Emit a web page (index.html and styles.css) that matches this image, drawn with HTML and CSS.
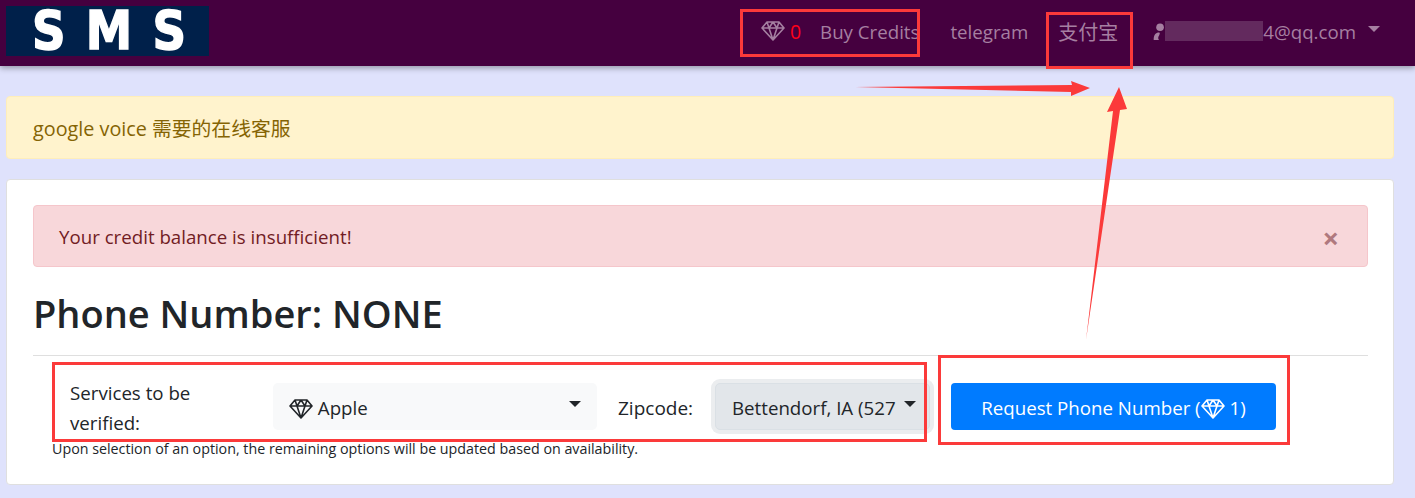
FILE: index.html
```html
<!DOCTYPE html>
<html lang="en">
<head>
    <meta charset="UTF-8">
    <meta name="viewport" content="width=device-width, initial-scale=1.0">
    <title>SMS</title>
    <link rel="stylesheet" href="styles.css">
</head>
<body>
    <svg class="icon-defs" width="0" height="0">
        <symbol id="gem" viewBox="0 0 24 20">
            <path d="M6 1h12l5 6-11 12L1 7zM1 7h22M8 7l4 12 4-12M6 1l2 6 4-6 4 6 2-6" fill="none" stroke="currentColor" stroke-width="1.6" stroke-linejoin="round"/>
        </symbol>
    </svg>
    <nav class="navbar">
        <a href="#" class="brand"><span>SMS</span></a>
        <ul class="nav-links">
            <li class="credits">
                <svg class="gem"><use href="#gem"/></svg>
                <span class="balance">0</span>
                <a href="#" class="buy">Buy Credits</a>
            </li>
            <li class="telegram"><a href="#">telegram</a></li>
            <li class="alipay"><a href="#">支付宝</a></li>
            <li class="account">
                <svg class="user" viewBox="0 0 10 16"><circle cx="6" cy="4" r="3.6" fill="currentColor"/><path d="M0 16c0-5 2-7 5-7 1 0 1 1 0 3-1 1-1 3 0 4z" fill="currentColor"/></svg>
                <span class="blur"></span><a href="#">4@qq.com</a>
                <span class="caret"></span>
            </li>
        </ul>
    </nav>

    <main class="content">
        <div class="notice">google voice 需要的在线客服</div>
        <section class="card">
            <div class="alert">
                <span>Your credit balance is insufficient!</span>
                <span class="close">×</span>
            </div>
            <h1>Phone Number: NONE</h1>
            <hr>
            <form class="request-form">
                <label class="service-label">Services to be verified:</label>
                <div class="select service">
                    <span><svg class="gem"><use href="#gem"/></svg> Apple</span>
                    <span class="caret"></span>
                </div>
                <label class="zip-label">Zipcode:</label>
                <div class="select zip">
                    <span>Bettendorf, IA (527</span>
                    <span class="caret"></span>
                </div>
                <button type="button" class="request-btn">Request Phone Number (<svg class="gem"><use href="#gem"/></svg> 1)</button>
            </form>
            <small class="hint">Upon selection of an option, the remaining options will be updated based on availability.</small>
        </section>
    </main>

    <!-- red markup drawn on top of the screenshot -->
    <div class="mark mark-credits"></div>
    <div class="mark mark-alipay"></div>
    <div class="mark mark-form"></div>
    <div class="mark mark-btn"></div>
    <svg class="arrows" width="1415" height="498">
        <polygon points="855,87 1072,85 1071,81 1090,88 1071,96 1071,92" fill="#fb3a3a"/>
        <polygon points="1086,340 1113,111 1107,112 1119,87 1127,109 1120,110" fill="#fb3a3a"/>
    </svg>
</body>
</html>
```
FILE: styles.css
```css
body {
    font-family: 'Open Sans', 'Noto Sans CJK SC', sans-serif;
    margin: 0;
    background: #dfe2fc;
    color: #212529;
    font-size: 18.7px;
    height: 498px;
    overflow: hidden;
    position: relative;
}
.icon-defs {
    position: absolute;
}
.navbar {
    height: 66px;
    box-sizing: border-box;
    padding: 6px 35px 0 6px;
    background: #45003f;
    box-shadow: 0 2px 6px rgba(0, 0, 0, 0.35);
    display: flex;
    justify-content: space-between;
    align-items: flex-start;
}
.brand {
    width: 203px;
    height: 50px;
    box-sizing: border-box;
    padding-left: 26px;
    background: #00204a;
    color: white;
    font-family: 'DejaVu Sans', sans-serif;
    font-weight: bold;
    font-size: 53px;
    line-height: 50px;
    letter-spacing: 23px;
    text-decoration: none;
    white-space: nowrap;
    -webkit-text-stroke: 1.5px white;
}
.brand span {
    display: inline-block;
    transform: scaleX(0.88);
    transform-origin: left center;
}
.nav-links {
    list-style: none;
    margin: 0;
    padding: 0;
    height: 50px;
    display: flex;
    align-items: center;
    color: #a57fa1;
}
.nav-links a {
    color: #a57fa1;
    text-decoration: none;
}
.nav-links .gem {
    width: 24px;
    height: 20px;
    vertical-align: -3px;
}
.credits {
    display: flex;
    align-items: center;
}
.balance {
    color: #ff0018;
    font-size: 19.5px;
    margin-left: 5px;
    margin-right: 19px;
}
.telegram {
    margin-left: 31px;
}
.alipay {
    margin-left: 30px;
    font-size: 20px;
}
.account {
    margin-left: 35px;
    display: flex;
    align-items: center;
}
.user {
    width: 12px;
    height: 17px;
}
.blur {
    width: 98px;
    height: 20px;
    background: #632a5e;
}
.caret {
    display: inline-block;
    width: 0;
    height: 0;
    border-top: 6px solid currentColor;
    border-left: 6px solid transparent;
    border-right: 6px solid transparent;
}
.account .caret {
    margin-left: 12px;
    margin-top: -5px;
}
.content {
    padding: 30px 21px 0 6px;
}
.notice {
    height: 63px;
    box-sizing: border-box;
    padding-left: 26px;
    display: flex;
    align-items: center;
    background: #fff3cd;
    border: 1px solid #ffeeba;
    border-radius: 4px;
    color: #856404;
    font-size: 19.8px;
}
.card {
    margin-top: 20px;
    height: 306px;
    box-sizing: border-box;
    padding: 25px 25px 0 26px;
    background: white;
    border: 1px solid #dfdfdf;
    border-radius: 4px;
}
.alert {
    height: 62px;
    box-sizing: border-box;
    padding: 0 25px;
    display: flex;
    align-items: center;
    justify-content: space-between;
    background: #f8d7da;
    border: 1px solid #f5c6cb;
    border-radius: 4px;
    color: #721c24;
}
.close {
    font-size: 29px;
    font-weight: bold;
    color: #b0797e;
    margin-right: 3px;
    padding-top: 2px;
}
h1 {
    margin: 20px 0 0;
    font-size: 38px;
    font-weight: 600;
    line-height: 52px;
}
hr {
    margin: 16px 0 0;
    border: 0;
    border-top: 1px solid #dfdfdf;
}
.request-form {
    margin-top: 27px;
    padding-left: 37px;
    height: 47px;
    display: flex;
    align-items: center;
}
.service-label {
    width: 140px;
    line-height: 30px;
    margin-right: 63px;
    padding-top: 2px;
}
.select {
    height: 47px;
    box-sizing: border-box;
    padding: 2px 16px 0;
    display: flex;
    align-items: center;
    justify-content: space-between;
    border-radius: 5px;
}
.select .caret {
    color: #212529;
    margin-top: -7px;
}
.service {
    width: 324px;
    background: #f8f9fa;
}
.service .gem {
    width: 24px;
    height: 20px;
    vertical-align: -4px;
}
.zip-label {
    width: 76px;
    margin-left: 21px;
    margin-right: 21px;
    padding-top: 2px;
    font-size: 19px;
}
.zip {
    width: 215px;
    padding: 2px 13px 0 16px;
    background: #e2e6ea;
    border: 1px solid #dae0e5;
    box-shadow: 0 0 0 4px #ebedef;
    white-space: nowrap;
}
.request-btn {
    margin-left: 21px;
    width: 325px;
    height: 47px;
    padding-top: 2px;
    border: 0;
    border-radius: 4px;
    background: #007bff;
    color: white;
    font: inherit;
    white-space: nowrap;
}
.request-btn .gem {
    width: 24px;
    height: 20px;
    vertical-align: -4px;
}
.hint {
    display: block;
    margin-top: 9px;
    padding-left: 19px;
    font-size: 14.28px;
    line-height: 20px;
}
.mark {
    position: absolute;
    box-sizing: border-box;
    border: 3px solid #fb3a3a;
}
.mark-credits {
    left: 740px;
    top: 9px;
    width: 180px;
    height: 48px;
}
.mark-alipay {
    left: 1046px;
    top: 12px;
    width: 87px;
    height: 57px;
}
.mark-form {
    left: 52px;
    top: 362px;
    width: 875px;
    height: 80px;
}
.mark-btn {
    left: 938px;
    top: 355px;
    width: 352px;
    height: 90px;
}
.arrows {
    position: absolute;
    left: 0;
    top: 0;
}
```
